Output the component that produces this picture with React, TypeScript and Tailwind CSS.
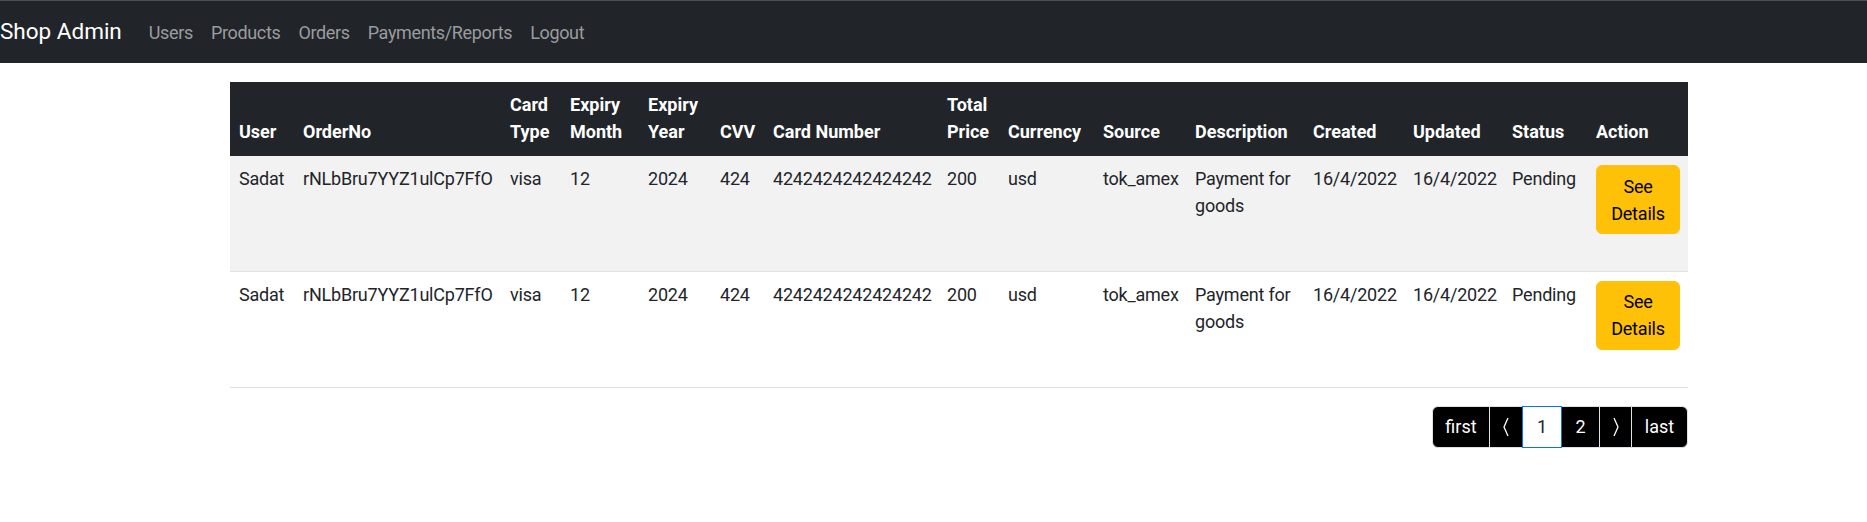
import React from 'react';

const columns = [
  { label: 'User', width: 64 },
  { label: 'OrderNo', width: 207 },
  { label: 'Card Type', width: 60 },
  { label: 'Expiry Month', width: 78 },
  { label: 'Expiry Year', width: 72 },
  { label: 'CVV', width: 53 },
  { label: 'Card Number', width: 174 },
  { label: 'Total Price', width: 61 },
  { label: 'Currency', width: 95 },
  { label: 'Source', width: 92 },
  { label: 'Description', width: 118 },
  { label: 'Created', width: 100 },
  { label: 'Updated', width: 99 },
  { label: 'Status', width: 84 },
  { label: 'Action', width: 101 },
];

const payments = [
  {
    id: 1,
    user: 'Sadat',
    orderNo: 'rNLbBru7YYZ1ulCp7FfO',
    cardType: 'visa',
    month: '12',
    year: '2024',
    cvv: '424',
    cardNumber: '4242424242424242',
    total: '200',
    currency: 'usd',
    source: 'tok_amex',
    description: 'Payment for goods',
    created: '16/4/2022',
    updated: '16/4/2022',
    status: 'Pending',
  },
  {
    id: 2,
    user: 'Sadat',
    orderNo: 'rNLbBru7YYZ1ulCp7FfO',
    cardType: 'visa',
    month: '12',
    year: '2024',
    cvv: '424',
    cardNumber: '4242424242424242',
    total: '200',
    currency: 'usd',
    source: 'tok_amex',
    description: 'Payment for goods',
    created: '16/4/2022',
    updated: '16/4/2022',
    status: 'Pending',
  },
];

const navLinks = ['Users', 'Products', 'Orders', 'Payments/Reports', 'Logout'];

function Chevron({ dir }: { dir: 'left' | 'right' }) {
  return (
    <svg width="6" height="20" viewBox="0 0 6 20" fill="none" stroke="white" strokeWidth="1.3">
      {dir === 'left' ? <polyline points="5,1 1,10 5,19" /> : <polyline points="1,1 5,10 1,19" />}
    </svg>
  );
}

function Pagination() {
  const base = 'h-[42px] flex items-center justify-center border -ml-px text-[18px]';
  return (
    <div className="flex">
      <div className={`${base} ml-0 w-[58px] bg-black text-white border-[#dee2e6] rounded-l-[6px]`}>first</div>
      <div className={`${base} w-[34px] bg-black border-[#dee2e6]`}>
        <Chevron dir="left" />
      </div>
      <div className={`${base} relative z-10 w-[40px] bg-white text-[#212529] border-[#0d6efd]`}>1</div>
      <div className={`${base} w-[39px] bg-black text-white border-[#dee2e6]`}>2</div>
      <div className={`${base} w-[33px] bg-black border-[#dee2e6]`}>
        <Chevron dir="right" />
      </div>
      <div className={`${base} w-[57px] bg-black text-white border-[#dee2e6] rounded-r-[6px]`}>last</div>
    </div>
  );
}

export default function App() {
  return (
    <div className="min-h-[522px] bg-white font-['Roboto','Liberation_Sans',sans-serif] text-[#212529]">
      <nav className="h-[63px] bg-[#212529] border-t border-[#4b4e52] flex items-center">
        <span className="text-[22.5px] leading-[30px] text-white mr-[18px] pb-[2px]">Shop Admin</span>
        <ul className="flex">
          {navLinks.map((l) => (
            <li key={l} className="px-[9px] text-[18px] text-[#9a9c9e] tracking-[-0.35px]">
              {l}
            </li>
          ))}
        </ul>
      </nav>

      <div className="ml-[230px] w-[1458px] mt-[19px]">
        <table className="w-full table-fixed border-collapse text-[18px] leading-[27px]">
          <colgroup>
            {columns.map((c) => (
              <col key={c.label} style={{ width: c.width }} />
            ))}
          </colgroup>
          <thead className="bg-[#212529] text-white">
            <tr className="border-b-2 border-[#212529]">
              {columns.map((c) => (
                <th key={c.label} className="px-[9px] py-[9px] text-left align-bottom font-bold">
                  {c.label}
                </th>
              ))}
            </tr>
          </thead>
          <tbody className="tracking-[-0.2px]">
            {payments.map((p, i) => (
              <tr key={p.id} className={`h-[116px] border-b border-[#dee2e6] ${i % 2 === 0 ? 'bg-[#f2f2f2]' : 'bg-white'}`}>
                <td className="px-[9px] py-[9px] align-top">{p.user}</td>
                <td className="px-[9px] py-[9px] align-top whitespace-nowrap">{p.orderNo}</td>
                <td className="px-[9px] py-[9px] align-top">{p.cardType}</td>
                <td className="px-[9px] py-[9px] align-top">{p.month}</td>
                <td className="px-[9px] py-[9px] align-top">{p.year}</td>
                <td className="px-[9px] py-[9px] align-top">{p.cvv}</td>
                <td className="px-[9px] py-[9px] align-top">{p.cardNumber}</td>
                <td className="px-[9px] py-[9px] align-top">{p.total}</td>
                <td className="px-[9px] py-[9px] align-top">{p.currency}</td>
                <td className="px-[9px] py-[9px] align-top">{p.source}</td>
                <td className="px-[9px] py-[9px] align-top">{p.description}</td>
                <td className="px-[9px] py-[9px] align-top">{p.created}</td>
                <td className="px-[9px] py-[9px] align-top">{p.updated}</td>
                <td className="px-[9px] py-[9px] align-top">{p.status}</td>
                <td className="px-[9px] py-[9px] align-top">
                  <button className="w-[84px] h-[69px] rounded-[6px] bg-[#ffc107] border border-[#ffc107] text-black text-[18px] leading-[27px] text-center">
                    See Details
                  </button>
                </td>
              </tr>
            ))}
          </tbody>
        </table>

        <div className="flex justify-end mt-[18px]">
          <Pagination />
        </div>
      </div>
    </div>
  );
}
